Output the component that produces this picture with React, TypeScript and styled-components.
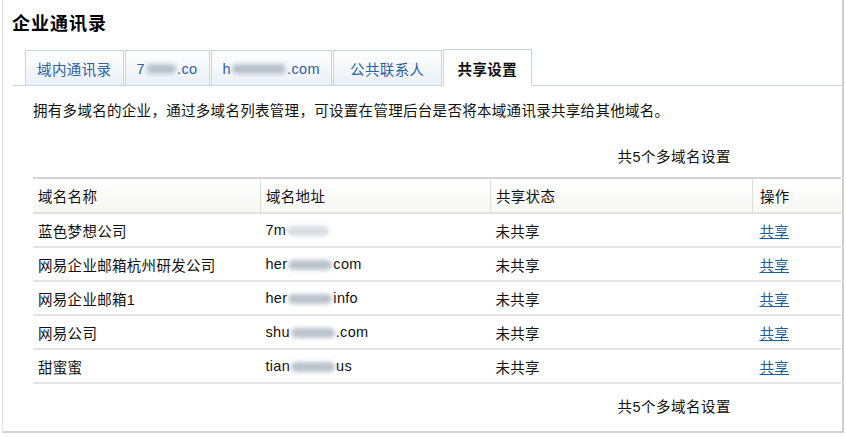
import React from 'react';
import styled, { createGlobalStyle } from 'styled-components';

const GlobalStyle = createGlobalStyle`
	html, body {
		margin: 0;
		padding: 0;
		background: #fff;
	}
	body {
		font-family: "Liberation Sans", "Noto Sans CJK SC", sans-serif;
		color: #111;
	}
`;

const Frame = styled.div`
	margin-left: 2px;
	width: 839px;
	height: 431px;
	border-left: 1px solid #e2e2e2;
	border-right: 2px solid #cfcfcf;
	border-bottom: 2px solid #d2d2d2;
	display: flex;
	flex-direction: column;
`;

const Title = styled.h1`
	margin: 0;
	padding: 12px 0 0 9px;
	height: 24px;
	font-size: 18px;
	line-height: 24px;
	font-weight: bold;
	letter-spacing: 1px;
	color: #000;
`;

const TabBar = styled.div`
	margin: 12px 0 0 10px;
	padding-left: 12px;
	height: 37px;
	display: flex;
	align-items: flex-end;
	border-bottom: 1px solid #c9d5e2;
`;

const Tab = styled.div<{ $active?: boolean; $pad?: number }>`
	height: ${(p) => (p.$active ? '37px' : '35px')};
	margin-bottom: ${(p) => (p.$active ? '-1px' : '0')};
	margin-right: 1px;
	padding: 1px ${(p) => p.$pad ?? 11}px 0;
	box-sizing: border-box;
	display: flex;
	align-items: center;
	border: 1px solid #c6d3e0;
	border-bottom: ${(p) => (p.$active ? '1px solid #fff' : 'none')};
	background: ${(p) => (p.$active ? '#fff' : 'linear-gradient(#ffffff, #e9f0f7)')};
	color: ${(p) => (p.$active ? '#111' : '#2b62a0')};
	font-weight: ${(p) => (p.$active ? 'bold' : 'normal')};
	font-size: 14.5px;
	letter-spacing: 0.4px;
	white-space: nowrap;
`;

const Blur = styled.span<{ $w: number; $light?: boolean }>`
	display: inline-block;
	width: ${(p) => p.$w}px;
	height: 10px;
	margin: 0 1px;
	border-radius: 5px;
	background: ${(p) => (p.$light ? '#d8dde3' : '#b9c2cc')};
	filter: blur(2px);
	vertical-align: middle;
`;

const Body = styled.div`
	padding-left: 30px;
	display: flex;
	flex-direction: column;
`;

const Intro = styled.p`
	margin: 16px 0 0;
	font-size: 14.5px;
	line-height: 18px;
	letter-spacing: 0.3px;
	color: #111;
`;

const Count = styled.div`
	margin-top: 28px;
	padding-right: 111px;
	text-align: right;
	font-size: 14.5px;
	line-height: 18px;
	letter-spacing: 0.5px;
`;

const Table = styled.table`
	margin-top: 11px;
	width: 808px;
	border-collapse: collapse;
	table-layout: fixed;
	font-size: 14.5px;
	letter-spacing: 0.3px;
`;

const Th = styled.th<{ $w?: number }>`
	width: ${(p) => (p.$w ? `${p.$w}px` : 'auto')};
	height: 33px;
	padding: 0 5px;
	text-align: left;
	font-weight: normal;
	border-top: 2px solid #d4d4d4;
	border-bottom: 2px solid #e1e1e1;
	border-right: 1px solid #dcdcdc;
	background: linear-gradient(#ffffff, #f6f6f2);
	&:last-child {
		border-right: none;
		padding-left: 7px;
	}
`;

const Td = styled.td`
	height: 32px;
	padding: 0 5px;
	border-bottom: 2px solid #e4e4e4;
	white-space: nowrap;
	&:last-child {
		padding-left: 7px;
	}
`;

const Link = styled.a`
	color: #1c5d9d;
	text-decoration: underline;
	cursor: pointer;
`;

const Footer = styled.div`
	margin-top: 14px;
	padding-right: 111px;
	text-align: right;
	font-size: 14.5px;
	line-height: 18px;
	letter-spacing: 0.5px;
`;

const rows = [
	{ name: '蓝色梦想公司', pre: '7m', blur: 42, post: '', light: true },
	{ name: '网易企业邮箱杭州研发公司', pre: 'her', blur: 44, post: 'com' },
	{ name: '网易企业邮箱1', pre: 'her', blur: 44, post: 'info' },
	{ name: '网易公司', pre: 'shu', blur: 44, post: '.com' },
	{ name: '甜蜜蜜', pre: 'tian', blur: 44, post: 'us' },
];

export default function App() {
	return (
		<>
			<GlobalStyle />
			<Frame>
				<Title>企业通讯录</Title>
				<TabBar>
					<Tab>域内通讯录</Tab>
					<Tab>7<Blur $w={30} />.co</Tab>
					<Tab>h<Blur $w={54} />.com</Tab>
					<Tab $pad={16}>公共联系人</Tab>
					<Tab $active $pad={14}>共享设置</Tab>
				</TabBar>
				<Body>
					<Intro>拥有多域名的企业，通过多域名列表管理，可设置在管理后台是否将本域通讯录共享给其他域名。</Intro>
					<Count>共5个多域名设置</Count>
					<Table>
						<thead>
							<tr>
								<Th $w={217}>域名名称</Th>
								<Th $w={219}>域名地址</Th>
								<Th $w={251}>共享状态</Th>
								<Th>操作</Th>
							</tr>
						</thead>
						<tbody>
							{rows.map((r) => (
								<tr key={r.name}>
									<Td>{r.name}</Td>
									<Td>
										{r.pre}
										<Blur $w={r.blur} $light={r.light} />
										{r.post}
									</Td>
									<Td>未共享</Td>
									<Td><Link>共享</Link></Td>
								</tr>
							))}
						</tbody>
					</Table>
					<Footer>共5个多域名设置</Footer>
				</Body>
			</Frame>
		</>
	);
}
